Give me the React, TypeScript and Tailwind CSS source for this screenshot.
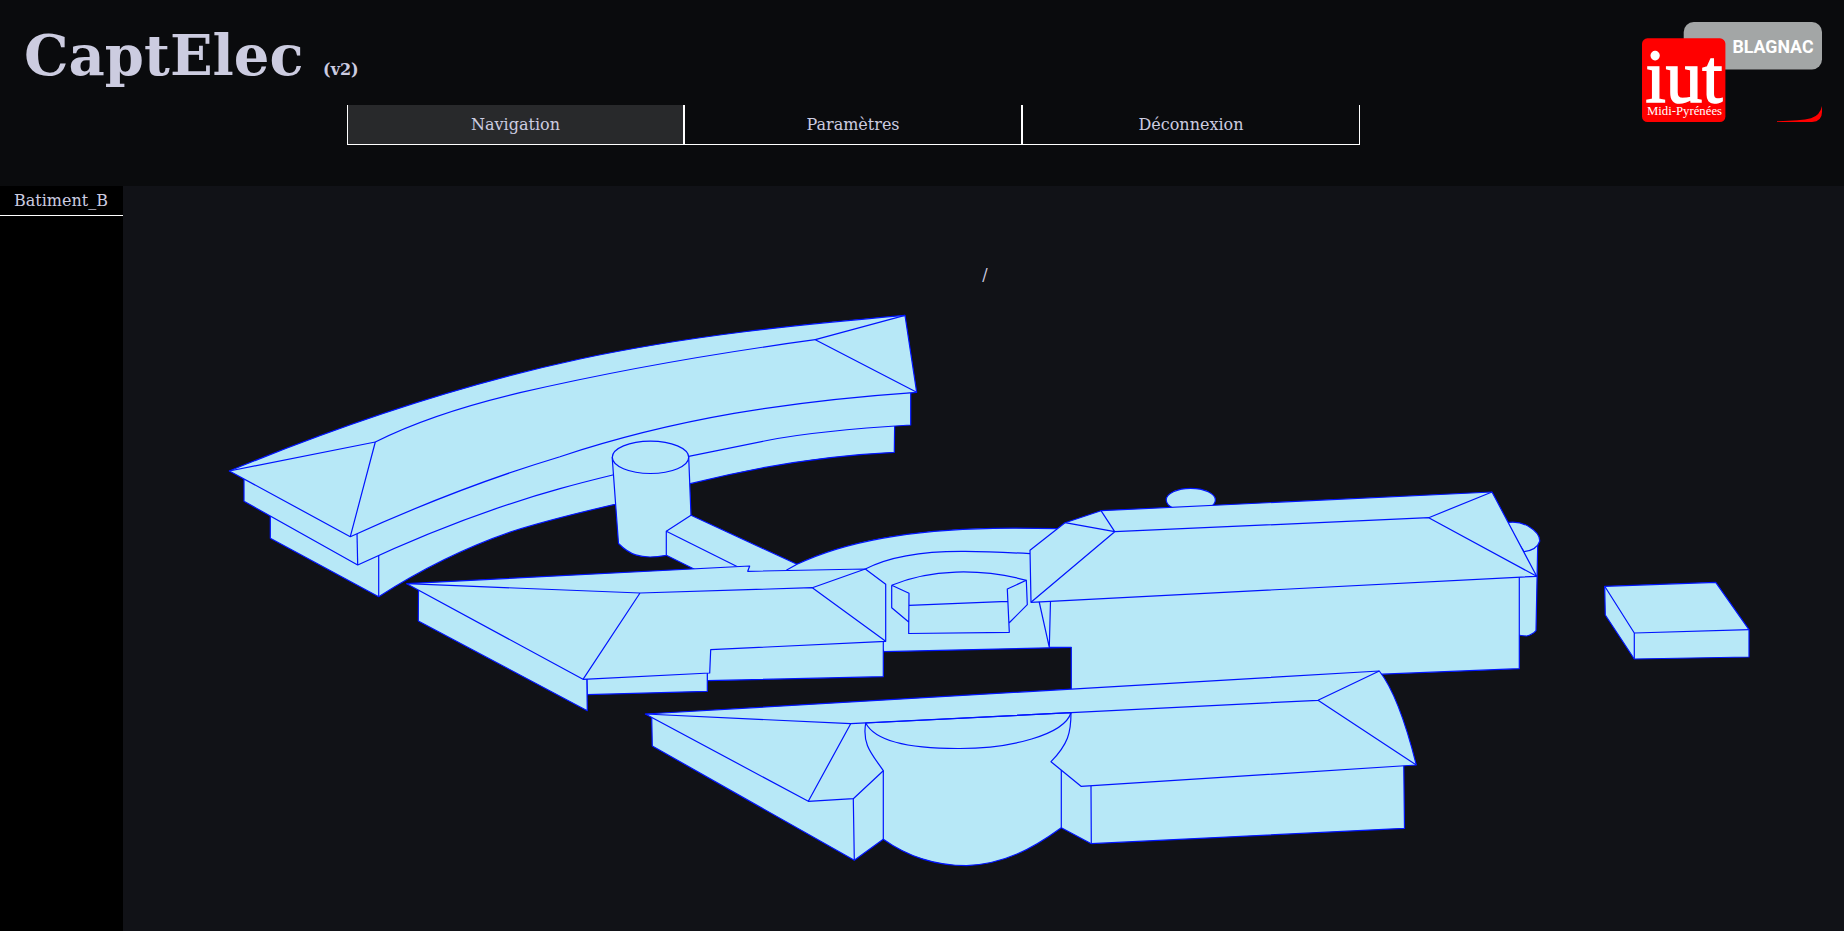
import React from 'react';

const FONT_SERIF = "font-['DejaVu_Serif','Liberation_Serif',serif]";

function CurvedWing() {
  return (
    <g>
      <path d="M270.3 516V538.3L378.7 596.7C421 569.5 466 547 513.3 531C548 520 582 512 615 504.3L690.3 483.7C758 466.5 826 455.5 894.3 452.3L894.7 420L600 440Z" />
      <path d="M378.7 555V596.7" />
      <path d="M244 479V501.3L357.7 565C423 534.5 492 507.5 560 488.7C578 483.5 595 479.3 612.7 475L688.7 456.3L767 440.5C810 432 860 428 910.7 425V392L700 400L400 480Z" />
      <path d="M357 533L357.7 565" />
      <path d="M229.3 471C346 423 463 384.2 580 359C688 335.8 797 324.8 905 315.3L916.7 392.3C790 401 675 418.5 560 456.7C490 477.7 420 505 350.3 536.7Z" />
      <path d="M375.3 442C423 418 472 404 520 392.7C618 370 717 353 815.3 339.7" fill="none" />
      <path d="M229.3 471L375.3 442L350.3 536.7M905 315.3L815.3 339.7L916.7 392.3" fill="none" />
    </g>
  );
}

function Tower() {
  return (
    <g>
      <path d="M612.2 457.5L618.5 543.5C628 553 639 560.5 666.3 555.3L691 515.3L688.7 457.3Z" />
      <ellipse cx="650.5" cy="457.3" rx="38.2" ry="16.2" />
      <path d="M691 515.3L666.3 531.3V555.3L700 572H790L797 564.3Z" />
      <path d="M666.3 531.3L740 568" />
    </g>
  );
}

function Hall() {
  return (
    <g>
      <path d="M786.7 570L797 564.3C852 538 925 529.5 993.3 528.3Q1025 528 1057.7 528.7L1071.3 560V647.3L884 651.7L860 600Z" />
      <path d="M865.3 569C892 555 930 551 965 551.3C985 551.5 1008 552.5 1030 553.7" fill="none" />
      <path d="M891.7 585.3C930 569 980 568 1026.3 580.3" fill="none" />
      <path d="M891.7 585.3V607.7L908.7 622M891.7 585.3L909 593.3L908.7 633.5L1009.3 632.3L1007.3 589L1026.3 580.3L1027.3 604.7L1009 623M909 605.3L1007.3 601.3" fill="none" />
    </g>
  );
}

function WestBuilding() {
  return (
    <g>
      <path d="M707.3 640V680.7L883.3 676.7V635Z" />
      <path d="M586.7 670L587.3 694.7L707.3 691.3V668Z" />
      <path d="M418.5 589L418.3 621L587.3 710.7L586.7 670Z" />
      <path d="M406.7 583.7L749.7 566L747.7 571.3L865.3 569L885.7 584.3V641.3L710.7 649.7L709.7 673L583 679.3Z" />
      <path d="M406.7 583.7L640 593L812.3 587.7L865.3 569M812.3 587.7L885.7 641.3M640 593L583 679.3" fill="none" />
    </g>
  );
}

function EastBuilding() {
  return (
    <g>
      <ellipse cx="1190.8" cy="500" rx="24.6" ry="11.6" />
      <path d="M1510 535L1537.7 545L1536 630.7Q1532 635 1526.7 636Q1522 636 1515 634Z" />
      <path d="M1505 523Q1518 520.5 1528 526Q1539.8 533 1539.8 541Q1537 550 1524 551.7Z" />
      <path d="M1039 600L1049.3 647.3H1071.3V700L1370 674.7L1519.3 668.7V570Z" stroke="none" />
      <path d="M1039 601L1049.3 647.3M1050.5 601L1049.3 647.3H1071.3V689M1519.3 577V668.7L1370 674.7" fill="none" />
      <path d="M1030 550.3L1065 522.7L1101 510.7L1492 492L1536.7 576.3L1031 602.3Z" />
      <path d="M1065 522.7L1114.7 531.7L1101 510.7M1031 602.3L1114.7 531.7L1428.7 517.7L1492 492M1428.7 517.7L1536.7 576.3" fill="none" />
    </g>
  );
}

function SouthBuilding() {
  return (
    <g>
      <path d="M651.7 717L652.3 746L854.3 860.3L883.3 839.3C908 857 938 865.7 966.7 865.7C1004 864 1032 849 1061.3 827.7L1091.3 843.7L1404.5 828.3L1403.7 760L1060 708L875 718Z" />
      <path d="M645.3 714L1379.3 671Q1399 696 1416.3 765L1081 786.3L1051 761.7C1068 744 1071 733 1071 712.7L865.7 723C862 745 872 754 883.3 770.7L853.3 798.7L808.3 801.3Z" />
      <path d="M645.3 714L850.7 723.7L1318 700.3L1379.3 671M1318 700.3L1416.3 765M850.7 723.7L808.3 801.3" fill="none" />
      <path d="M865.7 723C876 743 917 748.7 960 748.5C1010 748.5 1064 735 1071 712.7" fill="none" />
      <path d="M853.3 798.7L854.3 860.3M883.3 770.7V839.3M1061.3 770V827.7M1091 786L1091.3 843.7" fill="none" />
    </g>
  );
}

function Annex() {
  return (
    <g>
      <path d="M1604.7 586.3L1715.7 582.3L1749 629.7V657L1634.3 659L1605.3 615Z" />
      <path d="M1604.7 586.3L1634.3 633L1749 629.7M1634.3 633V659" fill="none" />
    </g>
  );
}

function CampusMap() {
  return (
    <svg
      className="block h-[631px] w-[1721px] fill-[#b7e8f7] stroke-[#0014ff] stroke-[1.2]"
      viewBox="123 300 1721 631"
      strokeLinejoin="round"
    >
      <CurvedWing />
      <Tower />
      <Hall />
      <WestBuilding />
      <EastBuilding />
      <SouthBuilding />
      <Annex />
    </svg>
  );
}

function Logo() {
  return (
    <svg className="block h-[101px] w-[181px]" viewBox="1642 22 181 101">
      <rect x="1683.7" y="22" width="138.3" height="47.5" rx="10" fill="#a3a6a6" />
      <rect x="1642" y="38.3" width="83.4" height="83.7" rx="5.5" fill="#ff0000" />
      <text x="1645.5" y="102" textLength="77" lengthAdjust="spacingAndGlyphs" fill="#fff" className="font-['Liberation_Serif',serif] text-[77px]" stroke="#fff" strokeWidth="1.6">
        iut
      </text>
      <text x="1647" y="115" textLength="75" lengthAdjust="spacingAndGlyphs" fill="#fff" className="font-['Liberation_Serif',serif] text-[13px]">
        Midi-Pyrénées
      </text>
      <text x="1732.5" y="53.3" textLength="81" lengthAdjust="spacingAndGlyphs" fill="#fff" className="font-[Roboto,sans-serif] text-[18.5px] font-bold">
        BLAGNAC
      </text>
      <path d="M1777 121.9H1812Q1822 121.5 1822 112V106Q1820 115.5 1811 118.3Q1800 121 1777 121.2Z" fill="#ff0000" />
    </svg>
  );
}

function Tab({ label, active = false }: { label: string; active?: boolean }) {
  return (
    <a className={`flex h-10 items-center justify-center border-x border-b border-white ${active ? 'w-[337px] bg-[#28292b]' : 'w-[338px]'}`}>
      {label}
    </a>
  );
}

export default function App() {
  return (
    <div className={`flex h-[931px] w-full flex-col overflow-hidden bg-[#111217] text-base leading-[19px] text-[#cccce0] ${FONT_SERIF}`}>
      <header className="flex h-[186px] shrink-0 bg-[#0a0b0d]">
        <div className="flex w-[347px] shrink-0 pt-[22px] pl-6">
          <h1 className="flex items-baseline gap-[19.5px] self-start whitespace-nowrap text-[56px] leading-[66px] font-bold">
            CaptElec <span className="text-base">(v2)</span>
          </h1>
        </div>
        <nav className="mt-[105px] flex w-[1013px] shrink-0 self-start">
          <Tab label="Navigation" active />
          <Tab label="Paramètres" />
          <Tab label="Déconnexion" />
        </nav>
        <div className="flex flex-1 items-start justify-end pt-[22px] pr-[21px]">
          <Logo />
        </div>
      </header>
      <div className="flex h-[745px] shrink-0">
        <aside className="w-[123px] shrink-0 bg-black">
          <a className="flex h-[30px] items-center border-b border-white pl-3.5">Batiment_B</a>
        </aside>
        <main className="flex flex-1 flex-col">
          <p className="flex h-[114px] items-end justify-center pb-4 pl-[3px]">/</p>
          <CampusMap />
        </main>
      </div>
    </div>
  );
}
